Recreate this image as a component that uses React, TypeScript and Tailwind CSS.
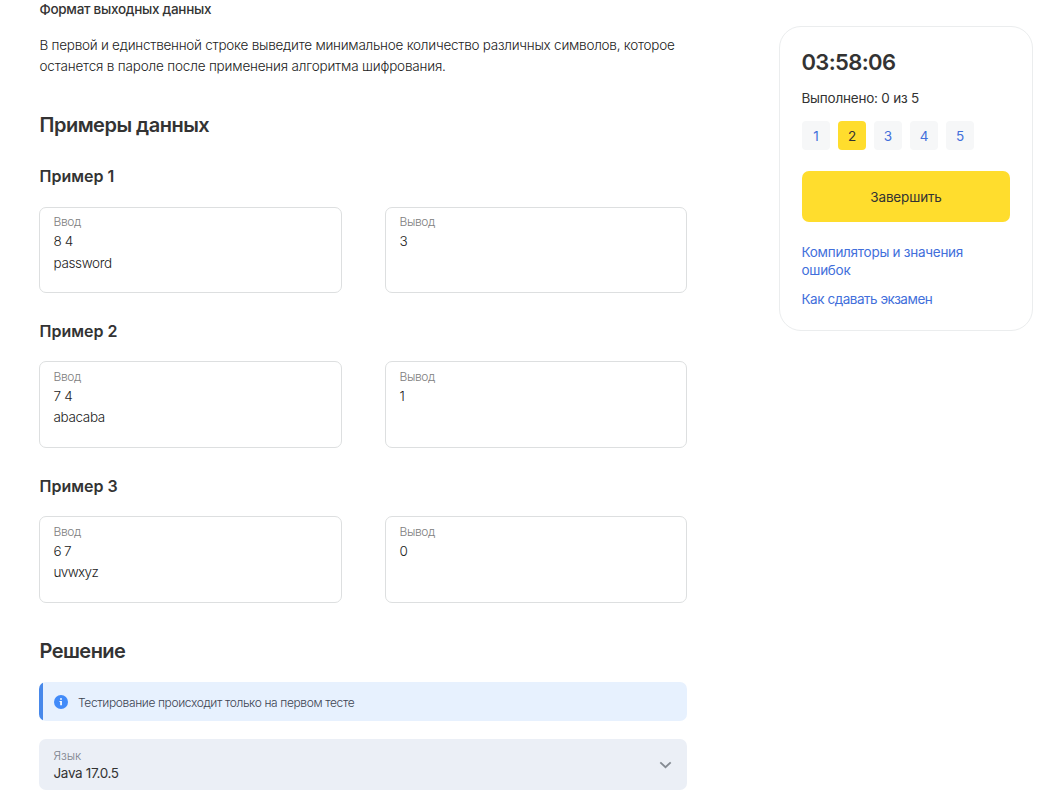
import React from 'react';

type Example = {
  id: number;
  input: string[];
  output: string;
  gap: string;
  boxes: string;
  size: string;
  row: string;
};

const examples: Example[] = [
  { id: 1, input: ['8 4', 'password'], output: '3', gap: 'mt-[25px]', boxes: 'mt-[19px]', size: 'h-[86px] pt-[5px]', row: 'leading-[21.5px] tracking-[-0.35px]' },
  { id: 2, input: ['7 4', 'abacaba'], output: '1', gap: 'mt-[26px]', boxes: 'mt-[18px]', size: 'h-[87px] pt-[6px]', row: 'leading-[21px] tracking-[-0.35px]' },
  { id: 3, input: ['6 7', 'uvwxyz'], output: '0', gap: 'mt-[26px]', boxes: 'mt-[18px]', size: 'h-[87px] pt-[6px]', row: 'leading-[21px] tracking-[-0.65px]' },
];

function DataBox({ label, rows, size, row }: { label: string; rows: string[]; size: string; row: string }) {
  return (
    <div className={`rounded-[7px] border border-[#dddfe0] px-[13.5px] ${size}`}>
      <div className="text-[12px] leading-[18px] font-light tracking-[-0.4px] text-[#808080]">{label}</div>
      {rows.map((text) => (
        <div key={text} className={`text-[13.5px] font-light text-[#222] ${row}`}>
          {text}
        </div>
      ))}
    </div>
  );
}

function ExampleBlock({ example }: { example: Example }) {
  return (
    <section className={example.gap}>
      <h3 className="pl-[0.5px] text-[16px] leading-6 font-semibold">Пример {example.id}</h3>
      <div className={`grid grid-cols-[303px_302px] gap-[43px] ${example.boxes}`}>
        <DataBox label="Ввод" rows={example.input} size={example.size} row={example.row} />
        <DataBox label="Вывод" rows={[example.output]} size={example.size} row={example.row} />
      </div>
    </section>
  );
}

function Sidebar() {
  return (
    <aside className="mt-[26px] h-[305px] w-[254px] shrink-0 rounded-[22px] border border-[#ebedee] pr-[22px] pl-[21.5px] pt-[19px]">
      <div className="text-[22px] leading-8 font-semibold tracking-[-0.65px]">03:58:06</div>
      <div className="mt-[10px] text-[13.5px] leading-5 tracking-[-0.22px]">Выполнено: 0 из 5</div>
      <div className="mt-[13px] ml-[0.5px] flex gap-2">
        {[1, 2, 3, 4, 5].map((n) => (
          <div
            key={n}
            className={`flex h-[29px] w-7 items-center justify-center rounded-[4px] pt-[2px] text-[13.5px] ${
              n === 2 ? 'bg-[#ffdd2d] text-[#333]' : 'bg-[#f6f7f8] text-[#426fdb]'
            }`}
          >
            {n}
          </div>
        ))}
      </div>
      <button className="mt-[21px] ml-[0.5px] flex h-[51px] w-[208px] items-center justify-center rounded-[7px] bg-[#ffdd2d] pt-[2px] text-[13.5px] tracking-[-0.15px]">
        Завершить
      </button>
      <div className="mt-[21px] text-[13.5px] leading-[18px] tracking-[-0.27px] text-[#426fdb]">
        Компиляторы и значения
        <br />
        ошибок
      </div>
      <div className="mt-[11px] text-[13.5px] leading-[18px] tracking-[-0.47px] text-[#426fdb]">Как сдавать экзамен</div>
    </aside>
  );
}

export default function App() {
  return (
    <div className="flex h-[790px] w-[1042px] overflow-hidden bg-white font-['Inter','Liberation_Sans',sans-serif] text-[#333]">
      <main className="mr-[92px] ml-[39px] w-[648px] shrink-0">
        <h4 className="pl-[0.5px] text-[13.5px] leading-[18px] font-medium tracking-[-0.28px]">
          Формат выходных данных
        </h4>
        <p className="mt-[17px] pl-[0.5px] text-[13.5px] leading-[21px] font-light tracking-[-0.245px] whitespace-nowrap text-[#222]">
          В первой и единственной строке выведите минимальное количество различных символов, которое
          <br />
          <span className="tracking-[-0.18px]">останется в пароле после применения алгоритма шифрования.</span>
        </p>
        <h2 className="mt-[34px] pl-[0.5px] text-[20px] leading-7 font-semibold tracking-[-0.5px]">Примеры данных</h2>
        {examples.map((e) => (
          <ExampleBlock key={e.id} example={e} />
        ))}
        <h2 className="mt-[34px] pl-[0.5px] text-[20px] leading-7 font-semibold tracking-[-0.55px]">Решение</h2>
        <div className="mt-[17px] flex h-[39px] items-center overflow-hidden rounded-[7px] bg-[#e7f1fe]">
          <div className="h-full w-1 bg-[#4788ea]" />
          <svg className="ml-[11px]" width="14" height="14" viewBox="0 0 14 14">
            <circle cx="7" cy="7" r="7" fill="#428bf9" />
            <path d="M6.1 3.2h1.8v1.6H6.1zM5.5 6h2.4v4.3H6.2V7h-.7z" fill="#fff" />
          </svg>
          <span className="ml-[10px] pt-[2px] text-[12px] font-light tracking-[-0.37px] text-[#3c4452]">
            Тестирование происходит только на первом тесте
          </span>
        </div>
        <div className="mt-[18px] flex h-[51px] items-center justify-between rounded-[7px] bg-[#ebeff6] pr-[15px] pl-[14.5px]">
          <div>
            <div className="text-[12px] leading-4 font-light tracking-[-0.1px] text-[#7d838c]">Язык</div>
            <div className="text-[13.5px] leading-[18px] tracking-[-0.35px]">Java 17.0.5</div>
          </div>
          <svg width="13" height="8" viewBox="0 0 13 8" fill="none" stroke="#858b93" strokeWidth="1.8">
            <path d="M1.3 1.3l5.2 4.9 5.2-4.9" />
          </svg>
        </div>
      </main>
      <Sidebar />
    </div>
  );
}
